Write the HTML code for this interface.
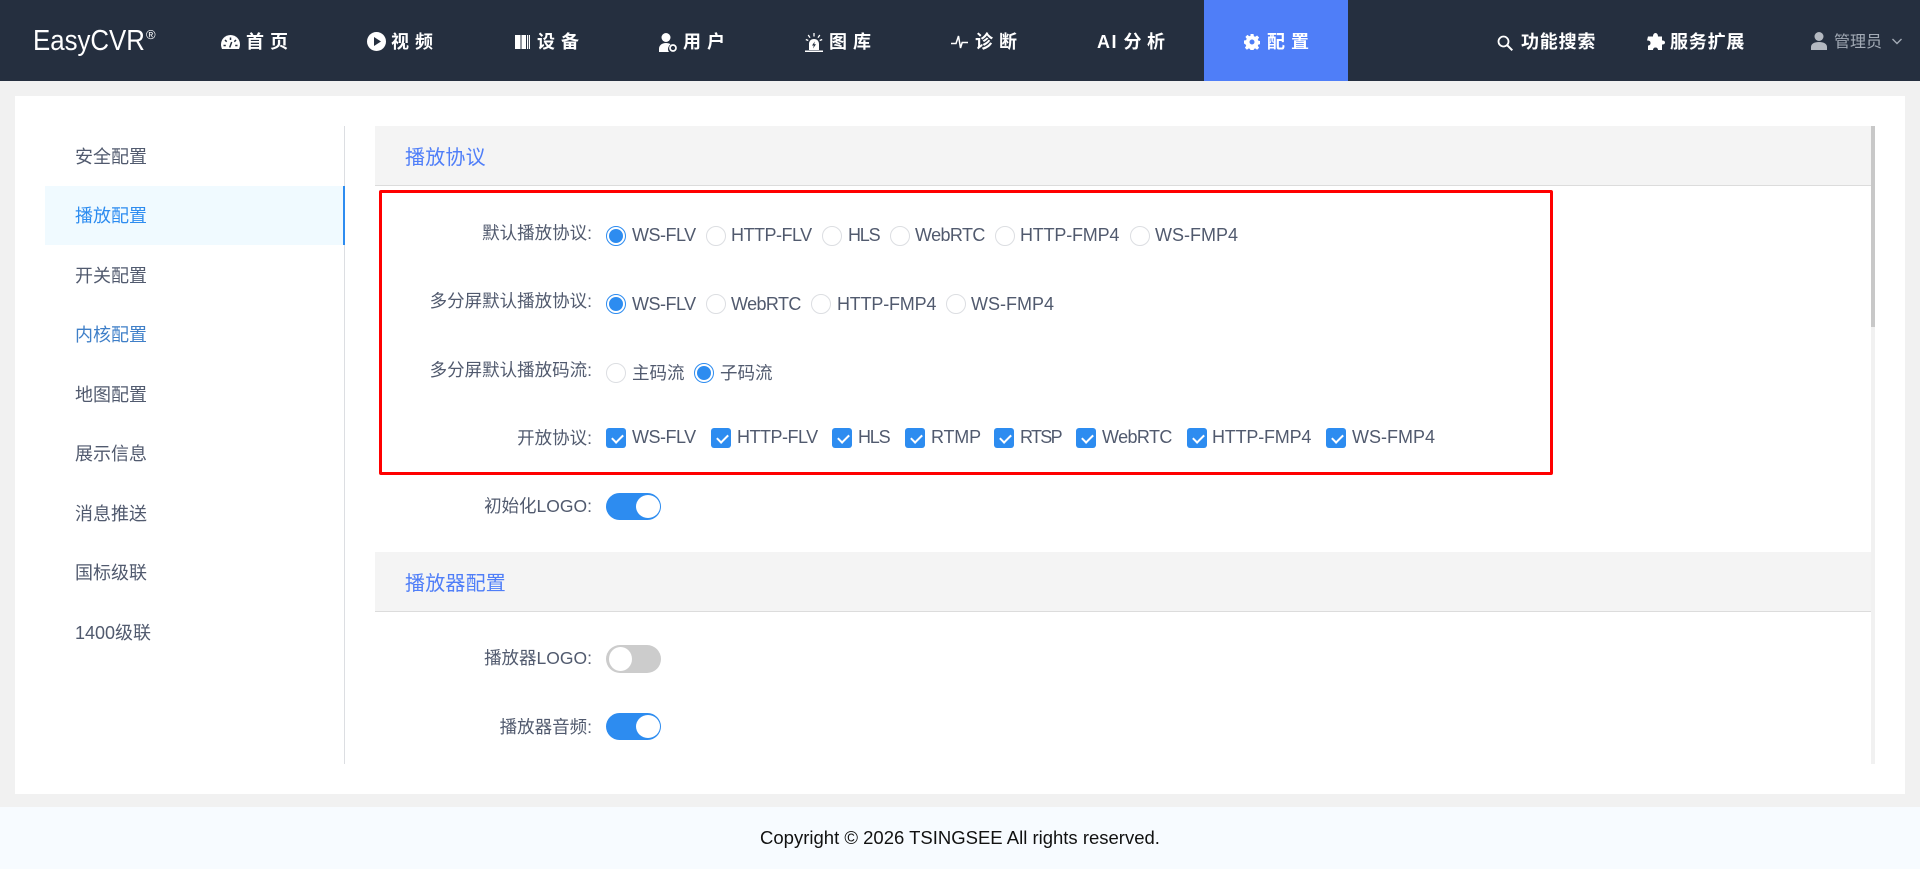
<!DOCTYPE html>
<html lang="zh"><head><meta charset="utf-8"><title>EasyCVR</title>
<style>
*{box-sizing:border-box;margin:0;padding:0}
html,body{width:1920px;height:869px;overflow:hidden;background:#f1f1f1;font-family:"Liberation Sans","Noto Sans CJK SC",sans-serif;color:#515a6e}
.a{position:absolute;white-space:nowrap}
#hd{position:absolute;left:0;top:0;width:1920px;height:81px;background:#252f3f}
.n{position:absolute;top:27px;line-height:30px;font-size:18px;font-weight:700;color:#fff;letter-spacing:6px;white-space:nowrap}
.n2{letter-spacing:.8px}
svg{position:absolute;display:block}
#panel{position:absolute;left:15px;top:96px;width:1890px;height:698px;background:#fff}
#ft{position:absolute;left:0;top:807px;width:1920px;height:62px;background:#f7fbff;text-align:center;line-height:62px;font-size:18.5px;color:#111}
.m{position:absolute;left:75px;font-size:18px;line-height:24px;color:#515a6e;white-space:nowrap}
.sec{position:absolute;left:375px;width:1496px;height:60px;background:#f4f4f4;border-bottom:1px solid #dcdcdc;padding-left:30px;line-height:64px;font-size:20px;letter-spacing:.2px;color:#4f7ef8}
.l{position:absolute;left:380px;width:212px;text-align:right;font-size:17.5px;line-height:24px;color:#515a6e;white-space:nowrap}
.t{position:absolute;font-size:18px;line-height:24px;color:#515a6e;white-space:nowrap}
.f{letter-spacing:-.5px}.w{letter-spacing:-.6px}.h{letter-spacing:-1.200px}.p{letter-spacing:-1.700px}.g{letter-spacing:-.2px}
.r{position:absolute;width:20px;height:20px;border:1px solid #dcdee2;border-radius:50%;background:#fff}
.r.on{border-color:#2d8cf0}
.r.on::after{content:"";position:absolute;left:2px;top:2px;width:14px;height:14px;border-radius:50%;background:#2d8cf0}
.c{position:absolute;width:20px;height:20px;border-radius:3px;background:#2d8cf0}
.c::after{content:"";position:absolute;left:7.500px;top:4px;width:5px;height:9px;border:solid #fff;border-width:0 2px 2px 0;transform:rotate(45deg)}
.s{position:absolute;left:606px;width:55px;height:27px;border-radius:14px;background:#2d8cf0}
.s::after{content:"";position:absolute;left:30px;top:2px;width:24px;height:23px;border-radius:50%;background:#fff}
.s.off{background:#ccc;height:28px}
.s.off::after{left:3px;top:2px;width:23px;height:24px}
</style></head><body>

<div id="hd">
<div class="a" style="left:33px;top:23px;font-size:29px;line-height:36px;color:#fff;transform:scaleX(.89);transform-origin:0 0">EasyCVR</div>
<div class="a" style="left:146px;top:27px;font-size:13px;line-height:15px;color:#fff">®</div>

<svg style="left:221px;top:35px" width="19" height="14" viewBox="0 0 19 14"><path fill="#fff" d="M9.500 0C4.200 0 0 4.200 0 9.500c0 1.600.4 3 1 4.500h17c.6-1.500 1-2.900 1-4.500C19 4.200 14.800 0 9.500 0z"/><path stroke="#252f3f" stroke-width="1.500" d="M9.500 2.500v2.500M4 5l1.700 1.700M15 5l-1.700 1.700M2.500 10.500h2.300M14.200 10.500h2.300M8.700 12.500l2-5.500"/></svg>
<div class="n" style="left:246px">首页</div>

<svg style="left:367px;top:32px" width="19" height="19" viewBox="0 0 19 19"><circle cx="9.500" cy="9.500" r="9.500" fill="#fff"/><path fill="#252f3f" d="M7 5l7 4.500-7 4.500z"/></svg>
<div class="n" style="left:391px">视频</div>

<svg style="left:515px;top:35px" width="15" height="14" viewBox="0 0 15 14"><path fill="#fff" d="M0 0h5.500v14H0zM6.500 0H11v14H6.500zM12 0h1.200v14H12zM14 0h1v14h-1z"/></svg>
<div class="n" style="left:537px">设备</div>

<svg style="left:659px;top:33px" width="18" height="19" viewBox="0 0 18 19"><circle cx="7" cy="4.500" r="4.500" fill="#fff"/><path fill="#fff" d="M0 19v-3c0-3.500 2.500-6 7-6 2 0 3.500.5 4.500 1.200-1.500 1.300-2.500 3-2.500 4.800 0 1.200.4 2.200 1 3z"/><circle cx="14" cy="15" r="3" fill="none" stroke="#fff" stroke-width="1.700"/></svg>
<div class="n" style="left:683px">用户</div>

<svg style="left:805px;top:33px" width="18" height="19" viewBox="0 0 18 19"><path fill="#fff" d="M4 17V11c0-3 2-5 5-5s5 2 5 5v6zM0 17.500h18V19H0z"/><path fill="#252f3f" d="M9.800 8.500L7 12.500h1.800L8 15.500l3-4.200H9.200z"/><path stroke="#fff" stroke-width="1.300" d="M9 0v3.500M3.200 2l1.800 2.700M14.800 2L13 4.700M.8 6.500l2.500 1M17.200 6.500l-2.500 1"/></svg>
<div class="n" style="left:829px">图库</div>

<svg style="left:951px;top:35px" width="17" height="14" viewBox="0 0 17 14"><path fill="none" stroke="#fff" stroke-width="1.500" d="M0 8.500h5L7.500 1l2 12 1.700-5.500H17"/></svg>
<div class="n" style="left:975px">诊断</div>

<div class="n" style="left:1097px;letter-spacing:5.500px"><span style="letter-spacing:1.500px">AI</span> <span style="margin-left:-5px">分析</span></div>

<div class="a" style="left:1204px;top:0;width:144px;height:81px;background:#4f7ef8"></div>
<svg style="left:1244px;top:34px" width="16" height="16" viewBox="0 0 16 16"><path fill="#fff" fill-rule="evenodd" d="M6.500 0h3l.4 2.200 1.300.6 1.900-1.300 2 2-1.300 1.900.6 1.300 2.100.4v3l-2.100.4-.6 1.300 1.300 1.900-2 2-1.900-1.300-1.300.6-.4 2.100h-3l-.4-2.100-1.300-.6-1.900 1.300-2-2 1.300-1.900-.6-1.300L0 9.500v-3l2.100-.4.600-1.300-1.300-1.900 2-2 1.900 1.300 1.300-.6zM8 5.500a2.500 2.500 0 100 5 2.500 2.500 0 000-5z"/></svg>
<div class="n" style="left:1267px">配置</div>

<svg style="left:1497px;top:35px" width="16" height="16" viewBox="0 0 16 16"><circle cx="6.500" cy="6.500" r="5" fill="none" stroke="#fff" stroke-width="1.800"/><path stroke="#fff" stroke-width="2" d="M10 10l5.300 5.300"/></svg>
<div class="n n2" style="left:1521px">功能搜索</div>

<svg style="left:1647px;top:33px" width="18" height="17" viewBox="0 0 18 17"><path fill="#fff" d="M6 3.500C6 1.500 7 0 8.500 0S11 1.500 11 3.500h4v4c1.700 0 3 .5 3 2s-1.300 2-3 2V17h-4c0-1.500-.8-2.500-2.500-2.500S6 15.500 6 17H1v-4.500c1.500 0 2.500-.7 2.500-2.500S2.500 7.500 0 7.500l1-4z"/></svg>
<div class="n n2" style="left:1670px">服务扩展</div>

<svg style="left:1811px;top:32px" width="16" height="18" viewBox="0 0 16 18"><circle cx="8" cy="4.500" r="4.500" fill="#b4b9c1"/><path fill="#b4b9c1" d="M0 18v-3c0-3 3-5 8-5s8 2 8 5v3z"/></svg>
<div class="a" style="left:1834px;top:31px;font-size:16px;line-height:24px;color:#a3abb6">管理员</div>
<svg style="left:1892px;top:38px" width="10" height="7" viewBox="0 0 10 7"><path fill="none" stroke="#a3abb6" stroke-width="1.400" d="M.5 1l4.500 4.500L9.500 1"/></svg>
</div>

<div id="panel"></div>

<div class="a" style="left:344px;top:126px;width:1px;height:638px;background:#dcdee2"></div>
<div class="a" style="left:45px;top:186px;width:300px;height:59px;background:#f0faff;border-right:2px solid #2d8cf0"></div>
<div class="m" style="top:145px">安全配置</div>
<div class="m" style="top:204px;color:#2d8cf0">播放配置</div>
<div class="m" style="top:264px">开关配置</div>
<div class="m" style="top:323px;color:#3f7fc8">内核配置</div>
<div class="m" style="top:383px">地图配置</div>
<div class="m" style="top:442px">展示信息</div>
<div class="m" style="top:502px">消息推送</div>
<div class="m" style="top:561px">国标级联</div>
<div class="m" style="top:621px">1400级联</div>

<div class="sec" style="top:126px">播放协议</div>
<div class="sec" style="top:552px">播放器配置</div>

<div class="a" style="left:1871px;top:126px;width:4px;height:638px;background:#f1f1f1"></div>
<div class="a" style="left:1871px;top:126px;width:4px;height:201px;background:#c8c8c8"></div>

<div class="a" style="left:379px;top:190px;width:1174px;height:285px;border:3px solid #f00;border-radius:2px"></div>

<div class="l" style="top:221px">默认播放协议:</div>
<i class="r on" style="left:606px;top:226px"></i><span class="t f" style="left:632px;top:223px">WS-FLV</span>
<i class="r" style="left:706px;top:226px"></i><span class="t f" style="left:731px;top:223px">HTTP-FLV</span>
<i class="r" style="left:822px;top:226px"></i><span class="t h" style="left:848px;top:223px">HLS</span>
<i class="r" style="left:890px;top:226px"></i><span class="t w" style="left:915px;top:223px">WebRTC</span>
<i class="r" style="left:995px;top:226px"></i><span class="t g" style="left:1020px;top:223px">HTTP-FMP4</span>
<i class="r" style="left:1130px;top:226px"></i><span class="t" style="left:1155px;top:223px">WS-FMP4</span>

<div class="l" style="top:289px">多分屏默认播放协议:</div>
<i class="r on" style="left:606px;top:294px"></i><span class="t f" style="left:632px;top:292px">WS-FLV</span>
<i class="r" style="left:706px;top:294px"></i><span class="t w" style="left:731px;top:292px">WebRTC</span>
<i class="r" style="left:811px;top:294px"></i><span class="t g" style="left:837px;top:292px">HTTP-FMP4</span>
<i class="r" style="left:946px;top:294px"></i><span class="t" style="left:971px;top:292px">WS-FMP4</span>

<div class="l" style="top:358px">多分屏默认播放码流:</div>
<i class="r" style="left:606px;top:363px"></i><span class="t" style="left:632px;top:361px;font-size:17.500px">主码流</span>
<i class="r on" style="left:694px;top:363px"></i><span class="t" style="left:720px;top:361px;font-size:17.500px">子码流</span>

<div class="l" style="top:426px">开放协议:</div>
<i class="c" style="left:606px;top:428px"></i><span class="t f" style="left:632px;top:425px">WS-FLV</span>
<i class="c" style="left:711px;top:428px"></i><span class="t f" style="left:737px;top:425px">HTTP-FLV</span>
<i class="c" style="left:832px;top:428px"></i><span class="t h" style="left:858px;top:425px">HLS</span>
<i class="c" style="left:905px;top:428px"></i><span class="t g" style="left:931px;top:425px">RTMP</span>
<i class="c" style="left:994px;top:428px"></i><span class="t p" style="left:1020px;top:425px">RTSP</span>
<i class="c" style="left:1076px;top:428px"></i><span class="t w" style="left:1102px;top:425px">WebRTC</span>
<i class="c" style="left:1187px;top:428px"></i><span class="t g" style="left:1212px;top:425px">HTTP-FMP4</span>
<i class="c" style="left:1326px;top:428px"></i><span class="t" style="left:1352px;top:425px">WS-FMP4</span>

<div class="l" style="top:494px">初始化LOGO:</div>
<i class="s" style="top:493px"></i>
<div class="l" style="top:646px">播放器LOGO:</div>
<i class="s off" style="top:645px"></i>
<div class="l" style="top:715px">播放器音频:</div>
<i class="s" style="top:713px"></i>

<div id="ft">Copyright © 2026 TSINGSEE All rights reserved.</div>
</body></html>
